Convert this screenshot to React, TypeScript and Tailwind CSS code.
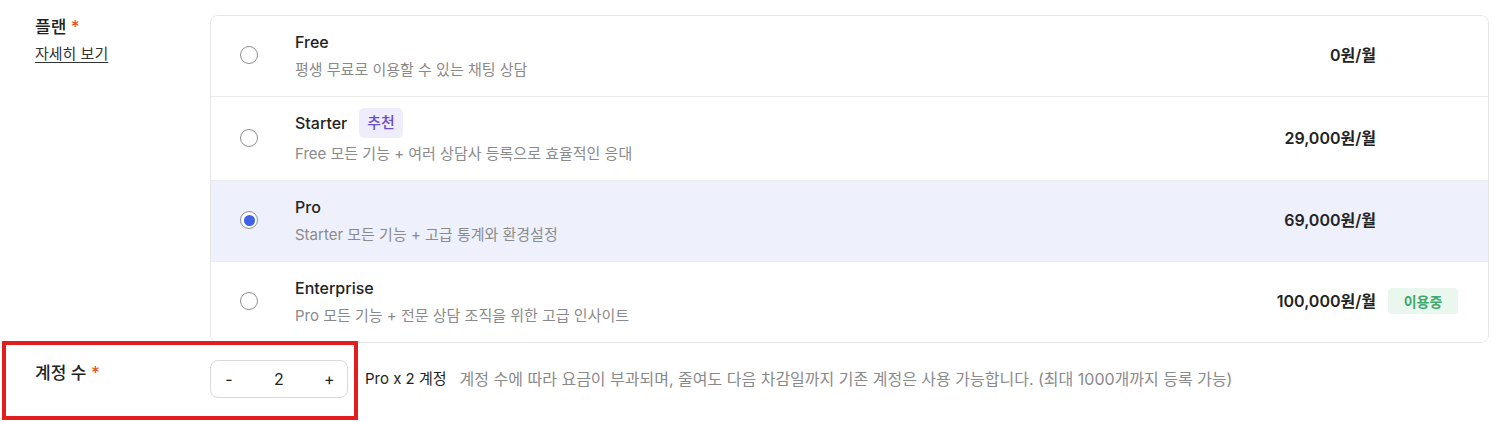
import { useState } from "react";

type Plan = {
  id: string;
  name: string;
  desc: string;
  price: string;
  recommend?: boolean;
  current?: boolean;
};

const plans: Plan[] = [
  { id: "free", name: "Free", desc: "평생 무료로 이용할 수 있는 채팅 상담", price: "0원/월" },
  { id: "starter", name: "Starter", desc: "Free 모든 기능 + 여러 상담사 등록으로 효율적인 응대", price: "29,000원/월", recommend: true },
  { id: "pro", name: "Pro", desc: "Starter 모든 기능 + 고급 통계와 환경설정", price: "69,000원/월" },
  { id: "enterprise", name: "Enterprise", desc: "Pro 모든 기능 + 전문 상담 조직을 위한 고급 인사이트", price: "100,000원/월", current: true },
];

function Radio({ checked }: { checked: boolean }) {
  return (
    <span className="flex h-[18px] w-[18px] shrink-0 items-center justify-center rounded-full border border-[#8f8f8f] bg-white">
      {checked && <span className="h-[11px] w-[11px] rounded-full bg-[#3d63e6]" />}
    </span>
  );
}

export default function App() {
  const [selected, setSelected] = useState("pro");
  const [count, setCount] = useState(2);

  return (
    <div
      className="relative h-[422px] w-full overflow-hidden bg-white text-[#222]"
      style={{ fontFamily: '"Inter", "Noto Sans CJK KR", sans-serif' }}
    >
      <div className="flex flex-col gap-[17px] pl-[35px] pr-[20px] pt-[15px]">
        {/* 플랜 */}
        <div className="flex">
          <div className="w-[175px] shrink-0 pt-[1px]">
            <div className="text-[17px] font-medium leading-[22px]">
              플랜 <span className="text-[#e8542a]">*</span>
            </div>
            <a className="mt-[6px] block text-[15px] leading-[20px] text-[#333] underline underline-offset-[3px]">
              자세히 보기
            </a>
          </div>

          <div className="flex-1 overflow-hidden rounded-[8px] border border-[#e6e6e6]">
            {plans.map((p, i) => (
              <div
                key={p.id}
                onClick={() => setSelected(p.id)}
                className={
                  "flex cursor-pointer items-center pl-[29px] pr-[30px] pt-[14px] pb-[16px] " +
                  (i > 0 ? "border-t border-[#ebebeb] " : "") +
                  (selected === p.id ? "bg-[#eef1fc]" : "bg-white")
                }
              >
                <Radio checked={selected === p.id} />
                <div className="ml-[37px] flex-1">
                  <div className="flex h-[24px] items-center gap-[12px]">
                    <span className="text-[16px] font-medium">{p.name}</span>
                    {p.recommend && (
                      <span className="flex h-[30px] items-center rounded-[5px] bg-[#efedfb] px-[8px] text-[15px] font-medium text-[#6a4fc6]">
                        추천
                      </span>
                    )}
                  </div>
                  <div className={(p.recommend ? "mt-[9px]" : "mt-[6px]") + " text-[15px] leading-[20px] text-[#8a8a8a]"}>
                    {p.desc}
                  </div>
                </div>
                <div className="text-[16px] font-semibold">{p.price}</div>
                <div className="ml-[12px] w-[70px]">
                  {p.current && (
                    <span className="flex h-[26px] items-center justify-center rounded-[4px] bg-[#e9f7ee] text-[14px] font-semibold text-[#3fa86c]">
                      이용중
                    </span>
                  )}
                </div>
              </div>
            ))}
          </div>
        </div>

        {/* 계정 수 */}
        <div className="flex">
          <div className="w-[175px] shrink-0 pt-[2px] text-[17px] font-medium leading-[22px]">
            계정 수 <span className="text-[#e8542a]">*</span>
          </div>
          <div className="flex items-center">
            <div className="flex h-[38px] w-[138px] items-center justify-between rounded-[8px] border border-[#d9d9d9] px-[13px] text-[16px]">
              <button onClick={() => setCount(Math.max(1, count - 1))} className="w-[10px]">-</button>
              <span>{count}</span>
              <button onClick={() => setCount(Math.min(1000, count + 1))} className="w-[10px]">+</button>
            </div>
            <span className="ml-[17px] text-[15px]">Pro x {count} 계정</span>
            <span className="ml-[13px] text-[16px] text-[#8a8a8a]">
              계정 수에 따라 요금이 부과되며, 줄여도 다음 차감일까지 기존 계정은 사용 가능합니다. (최대 1000개까지 등록 가능)
            </span>
          </div>
        </div>
      </div>

      {/* 강조 박스 */}
      <div className="pointer-events-none absolute left-[2px] top-[341px] h-[79px] w-[356px] border-[4px] border-[#e11d1d]" />
    </div>
  );
}
